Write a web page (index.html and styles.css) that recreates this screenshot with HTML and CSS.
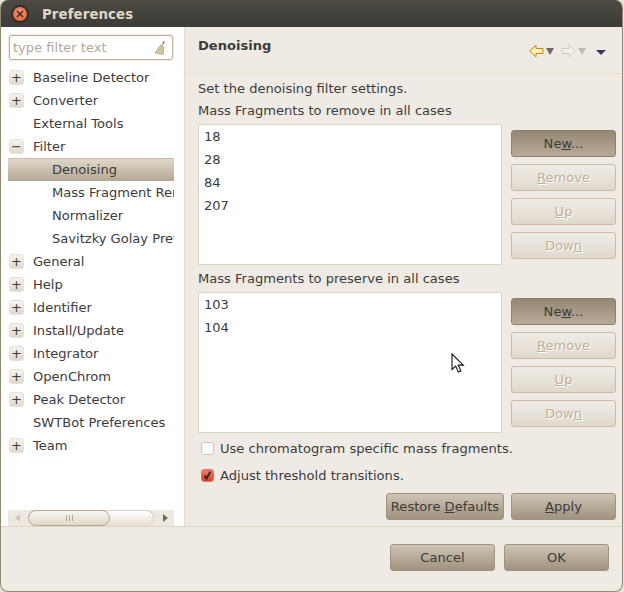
FILE: index.html
```html
<!DOCTYPE html>
<html lang="en">
	<head>
		<meta charset="utf-8" />
		<meta name="viewport" content="width=device-width, initial-scale=1" />
		<title>Preferences</title>
		<link rel="stylesheet" href="styles.css">
	</head>
	<body>
		<div class="window">
			<header class="titlebar">
				<span class="close">
					<svg width="8" height="8" viewBox="0 0 8 8"><path d="M1 1l6 6M7 1l-6 6" stroke="#3a2a22" stroke-width="1.6" fill="none"/></svg>
				</span>
				<span class="title">Preferences</span>
			</header>

			<div class="main">
				<aside class="sidebar">
					<div class="filter">
						<span class="filter-text">type filter text</span>
						<svg class="broom" width="12" height="15" viewBox="0 0 12 15">
							<path d="M9 1l2 1-3 5z" fill="#8a8470"/>
							<path d="M6.5 5l3.5 2.5-1 7-8-1.500z" fill="#cfc79a" stroke="#77715c" stroke-width=".8" stroke-dasharray="1 1"/>
						</svg>
					</div>
					<div class="tree">
						<div class="row"><span class="toggle">+</span>Baseline Detector</div>
						<div class="row"><span class="toggle">+</span>Converter</div>
						<div class="row leaf">External Tools</div>
						<div class="row"><span class="toggle">&minus;</span>Filter</div>
						<div class="row child selected">Denoising</div>
						<div class="row child">Mass Fragment Remover</div>
						<div class="row child">Normalizer</div>
						<div class="row child">Savitzky Golay Preferences</div>
						<div class="row"><span class="toggle">+</span>General</div>
						<div class="row"><span class="toggle">+</span>Help</div>
						<div class="row"><span class="toggle">+</span>Identifier</div>
						<div class="row"><span class="toggle">+</span>Install/Update</div>
						<div class="row"><span class="toggle">+</span>Integrator</div>
						<div class="row"><span class="toggle">+</span>OpenChrom</div>
						<div class="row"><span class="toggle">+</span>Peak Detector</div>
						<div class="row leaf">SWTBot Preferences</div>
						<div class="row"><span class="toggle">+</span>Team</div>
					</div>
					<div class="scrollbar">
						<span class="arrow-left"></span>
						<div class="track">
							<div class="thumb">
								<svg width="7" height="6" viewBox="0 0 7 6"><path d="M.5 0v6M3.500 0v6M6.500 0v6" stroke="#b5a993"/></svg>
							</div>
						</div>
						<span class="arrow-right"></span>
					</div>
				</aside>

				<section class="page">
					<div class="page-head">
						<h1>Denoising</h1>
						<div class="nav">
							<svg width="15" height="14" viewBox="0 0 15 14"><path d="M.8 7L7 1v3.500h7v5H7V13z" fill="#fdeeb0" stroke="#c48c14"/></svg>
							<span class="drop"></span>
							<svg class="forward" width="15" height="14" viewBox="0 0 15 14"><path d="M14.200 7L8 1v3.500H1v5h7V13z" fill="#f2efe9" stroke="#cfccc6"/></svg>
							<span class="drop off"></span>
							<span class="view-menu"></span>
						</div>
					</div>

					<div class="page-body">
						<p class="intro">Set the denoising filter settings.</p>

						<p class="label">Mass Fragments to remove in all cases</p>
						<div class="fragments">
							<div class="list">
								<div>18</div>
								<div>28</div>
								<div>84</div>
								<div>207</div>
							</div>
							<div class="side-buttons">
								<button class="btn pressed">Ne<u>w</u>...</button>
								<button class="btn" disabled><u>R</u>emove</button>
								<button class="btn" disabled><u>U</u>p</button>
								<button class="btn" disabled>Dow<u>n</u></button>
							</div>
						</div>

						<p class="label second">Mass Fragments to preserve in all cases</p>
						<div class="fragments">
							<div class="list">
								<div>103</div>
								<div>104</div>
							</div>
							<div class="side-buttons">
								<button class="btn pressed">Ne<u>w</u>...</button>
								<button class="btn" disabled><u>R</u>emove</button>
								<button class="btn" disabled><u>U</u>p</button>
								<button class="btn" disabled>Dow<u>n</u></button>
							</div>
						</div>

						<div class="option first"><span class="check"></span>Use chromatogram specific mass fragments.</div>
						<div class="option">
							<span class="check checked">
								<svg width="11" height="11" viewBox="0 0 11 11"><path d="M2.500 5.500l2 3 4-7" stroke="#2e2320" stroke-width="1.800" fill="none"/></svg>
							</span>Adjust threshold transitions.
						</div>

						<div class="page-actions">
							<button class="btn restore">Restore <u>D</u>efaults</button>
							<button class="btn"><u>A</u>pply</button>
						</div>
					</div>
				</section>
			</div>

			<footer class="footer">
				<button class="btn">Cancel</button>
				<button class="btn">OK</button>
			</footer>

			<svg class="cursor" width="14" height="21" viewBox="0 0 14 21">
				<path d="M1 1v15.500l3.700-3.400 2.600 6 2.600-1.100-2.600-5.900h5z" fill="#fff" stroke="#111" stroke-width="1.100"/>
			</svg>
		</div>
	</body>
</html>
```

FILE: styles.css
```css
* {
	margin: 0;
	padding: 0;
	box-sizing: border-box;
}

body {
	background: #e8e3da;
	color: #3c3c3c;
	font-family: "DejaVu Sans", sans-serif;
	font-size: 13.07px;
	width: 624px;
	height: 592px;
	overflow: hidden;
}

.window {
	position: relative;
	display: flex;
	flex-direction: column;
	width: 623px;
	height: 592px;
	background: #efebe4;
	border: 1px solid #8f8872;
	border-top: 0;
	border-radius: 8px;
	overflow: hidden;
}

/* title bar */
.titlebar {
	display: flex;
	align-items: center;
	height: 27px;
	margin: 0 -1px;
	padding-left: 13px;
	background: linear-gradient(#4d4a43, #3c3b37);
	flex: none;
}

.close {
	display: flex;
	align-items: center;
	justify-content: center;
	width: 14px;
	height: 14px;
	border-radius: 50%;
	background: radial-gradient(circle at 50% 40%, #f59a72, #e0552a);
	box-shadow: 0 0 0 2px #2e2c28;
}

.title {
	margin-left: 15px;
	padding-top: 1px;
	color: #dfd8c8;
	font-size: 13.333px;
	font-weight: bold;
	letter-spacing: .1px;
}

.main {
	display: flex;
	height: 499px;
	flex: none;
}

/* left tree */
.sidebar {
	display: flex;
	flex-direction: column;
	width: 184px;
	padding: 8px 10px 0 7px;
	background: #fff;
	border-right: 1px solid #e2dacb;
	flex: none;
}

.filter {
	display: flex;
	align-items: center;
	justify-content: space-between;
	height: 25px;
	margin: 0 1px;
	padding: 0 6px 0 3px;
	background: #fff;
	border: 1px solid #bcae96;
	border-radius: 3px;
	box-shadow: 0 0 0 1px #efebe4;
}

.filter-text {
	color: #b3a999;
}

.tree {
	flex: 1;
	margin-top: 6px;
	overflow: hidden;
}

.row {
	display: flex;
	align-items: center;
	height: 23px;
	white-space: nowrap;
	overflow: hidden;
}

.leaf {
	padding-left: 25px;
}

.child {
	padding-left: 44px;
}

.selected {
	background: linear-gradient(#e2dacd, #b5a793);
	box-shadow: inset 0 1px 0 #c9bca8;
}

.toggle {
	display: flex;
	align-items: center;
	justify-content: center;
	width: 15px;
	height: 15px;
	margin: 0 9px 0 1px;
	flex: none;
	font-size: 13px;
	line-height: 1;
	background: linear-gradient(#f6f3ee, #e0d9cc);
	border: 1px solid #e6e0d5;
	border-radius: 3px;
}

.scrollbar {
	display: flex;
	align-items: center;
	height: 16px;
	background: #ede8e0;
	flex: none;
}

.arrow-left,
.arrow-right {
	width: 0;
	height: 0;
	border-top: 4px solid transparent;
	border-bottom: 4px solid transparent;
}

.arrow-left {
	margin: 0 8px 0 7px;
	border-right: 5px solid #cdc7bb;
}

.arrow-right {
	margin-left: 9px;
	border-left: 5px solid #6e6a62;
}

.track {
	width: 126px;
	height: 16px;
	background: linear-gradient(#fff, #e4dccf);
	border: 1px solid #d8cfbf;
	border-bottom: 0;
	border-radius: 8px;
}

.thumb {
	display: flex;
	align-items: center;
	justify-content: center;
	width: 82px;
	height: 16px;
	margin: -1px 0 0 -1px;
	background: linear-gradient(#f8f6f2, #e0d8ca);
	border: 1px solid #b8aa92;
	border-radius: 8px;
}

/* right page */
.page {
	flex: 1;
	display: flex;
	flex-direction: column;
}

.page-head {
	display: flex;
	justify-content: space-between;
	height: 47px;
	padding: 11px 16px 0 13px;
	border-bottom: 1px solid #e8dfd0;
}

.page-head h1 {
	font-size: 13.07px;
	font-weight: bold;
}

.nav {
	display: flex;
	align-items: center;
	height: 14px;
	margin-top: 6px;
}

.nav .forward {
	margin-left: 7px;
}

.drop {
	width: 0;
	height: 0;
	margin-left: 2px;
	border-left: 4px solid transparent;
	border-right: 4px solid transparent;
	border-top: 7px solid #6f6a63;
}

.drop.off {
	border-top-color: #c4bcab;
}

.view-menu {
	width: 0;
	height: 0;
	margin: 2px 0 0 10px;
	border-left: 5px solid transparent;
	border-right: 5px solid transparent;
	border-top: 5px solid #3e3565;
}

.page-body {
	flex: 1;
	padding: 0 5px 0 13px;
}

.intro {
	height: 28px;
	padding-top: 6px;
	line-height: 17px;
}

.label {
	height: 22px;
	line-height: 17px;
}

.label.second {
	margin-top: 5px;
}

.fragments {
	display: flex;
	gap: 9px;
}

.list {
	width: 304px;
	height: 141px;
	padding-left: 5px;
	background: #fff;
	border: 1px solid #ddd3c2;
}

.list div {
	height: 23px;
	line-height: 23px;
}

.side-buttons {
	display: flex;
	flex-direction: column;
	gap: 7px;
	padding-top: 6px;
}

.btn {
	width: 105px;
	height: 27px;
	font: inherit;
	color: #3c3c3c;
	white-space: nowrap;
	background: linear-gradient(#cfc5b5, #9f927e);
	border: 1px solid #a0947f;
	border-radius: 3px;
}

.btn.pressed {
	background: linear-gradient(#958874, #b7ab99);
	border-color: #8d806c;
}

.btn:disabled {
	color: #bdb09b;
	text-shadow: 1px 1px 0 #fff;
	background: linear-gradient(#f0ece6, #dfd8cc);
	border-color: #cabda8;
}

.option {
	display: flex;
	align-items: center;
	height: 27px;
	padding-left: 3px;
}

.option.first {
	margin-top: 2px;
}

.check {
	display: flex;
	width: 13px;
	height: 13px;
	margin-right: 6px;
	background: #fff;
	border: 1px solid #cfc6b6;
	border-radius: 3px;
}

.check.checked {
	background: linear-gradient(#f47f66, #dd3f2c);
	border-color: #d07a65;
}

.page-actions {
	display: flex;
	justify-content: flex-end;
	gap: 7px;
	width: 418px;
	margin-top: 4px;
}

.btn.restore {
	width: 118px;
}

/* bottom buttons */
.footer {
	display: flex;
	justify-content: flex-end;
	gap: 9px;
	flex: 1;
	padding: 17px 13px 0 0;
	border-top: 1px solid #ddd5c5;
}

.cursor {
	position: absolute;
	left: 450px;
	top: 353px;
}
```
